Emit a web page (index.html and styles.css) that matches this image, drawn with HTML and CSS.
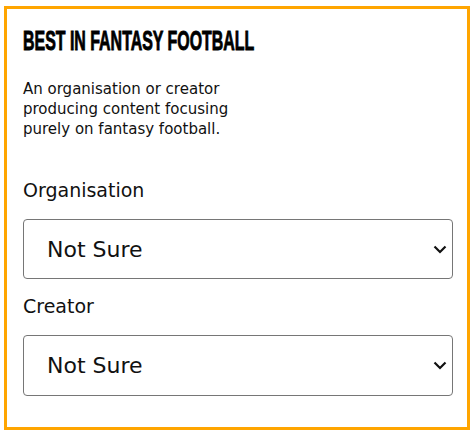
FILE: index.html
```html
<!DOCTYPE html>
<html lang="en">
<head>
<meta charset="utf-8">
<link rel="stylesheet" href="styles.css">
</head>
<body>
<div class="card">
  <h2 class="title"><span>BEST IN FANTASY FOOTBALL</span></h2>
  <p class="desc">An organisation or creator<br>producing content focusing<br>purely on fantasy football.</p>
  <label class="label" for="org">Organisation</label>
  <div class="select-wrap">
    <select id="org" class="select"><option>Not Sure</option></select>
    <svg class="chev" width="14" height="9" viewBox="0 0 14 9"><path d="M1.5 1.5 L7 7 L12.5 1.5" fill="none" stroke="#111" stroke-width="2.2"/></svg>
  </div>
  <label class="label label2" for="cre">Creator</label>
  <div class="select-wrap">
    <select id="cre" class="select select2"><option>Not Sure</option></select>
    <svg class="chev" width="14" height="9" viewBox="0 0 14 9"><path d="M1.5 1.5 L7 7 L12.5 1.5" fill="none" stroke="#111" stroke-width="2.2"/></svg>
  </div>
</div>
</body>
</html>
```

FILE: styles.css
```css
html, body { margin: 0; padding: 0; background: #fff; }
body { font-family: "DejaVu Sans", sans-serif; color: #111; }
.card {
  margin: 6px 4px 0 4px;
  width: 466px;
  height: 424px;
  box-sizing: border-box;
  border: 3px solid #ffa500;
  padding: 19px 14px 0 16px;
}
.title {
  margin: 0;
  height: 27px;
  line-height: 27px;
  font-family: "Liberation Sans Narrow", "Liberation Sans", sans-serif;
  font-weight: 700;
  font-size: 27px;
  color: #000;
  white-space: nowrap;
  -webkit-text-stroke: 0.9px #000;
}
.title span { display: inline-block; transform: scaleX(0.59); transform-origin: left center; }
.desc {
  margin: 24px 0 0 0;
  font-size: 15px;
  line-height: 20px;
  color: #111;
}
.label {
  display: block;
  margin-top: 40px;
  font-size: 19px;
  line-height: 22px;
  color: #111;
}
.label2 { margin-top: 16px; }
.select-wrap { position: relative; margin-top: 18px; }
.select {
  -webkit-appearance: none;
  appearance: none;
  display: block;
  width: 430px;
  height: 60px;
  box-sizing: border-box;
  border: 1px solid #767676;
  border-radius: 4px;
  background: #fff;
  padding: 0 0 0 23px;
  font-family: "DejaVu Sans", sans-serif;
  font-size: 22px;
  color: #111;
}
.select2 { height: 61px; }
.chev { position: absolute; right: 6px; top: 26px; }
```
